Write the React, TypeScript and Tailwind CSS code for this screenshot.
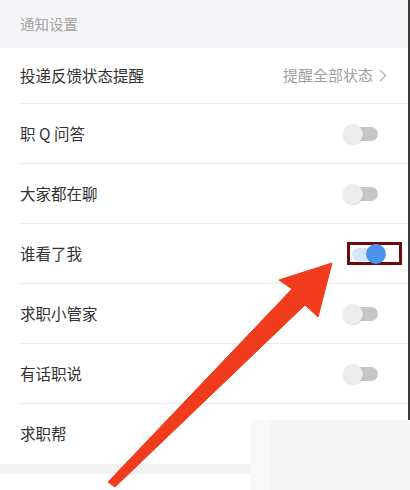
import React from "react";

const font = { fontFamily: '"Noto Sans CJK SC", "Noto Sans", sans-serif' };

function Toggle({ on }: { on?: boolean }) {
  if (on) {
    return (
      <div className="relative w-[34px] h-[20px]">
        <div className="absolute left-0 right-[6px] top-[4px] h-[13px] rounded-full bg-[#d3e5fb]" />
        <div className="absolute right-0 top-0 w-[20px] h-[20px] rounded-full bg-[#4a93ef]" />
      </div>
    );
  }
  return (
    <div className="relative w-[35px] h-[20px]">
      <div className="absolute left-[7px] right-0 top-[3px] h-[14px] rounded-full bg-[#c6c6c6]" />
      <div className="absolute left-0 top-0 w-[20px] h-[20px] rounded-full bg-[#ededed] shadow-[0_1px_2px_rgba(0,0,0,0.15)]" />
    </div>
  );
}

function Row({ label, children, last, h = "h-[60px]", pr = "pr-[30px]" }: { label: string; children?: React.ReactNode; last?: boolean; h?: string; pr?: string }) {
  return (
    <div className={`ml-5 ${h} flex items-center justify-between ${pr} ${last ? "" : "border-b border-[#ebebeb]"}`}>
      <span className="text-[15.5px] text-[#333333]">{label}</span>
      {children}
    </div>
  );
}

export default function App() {
  return (
    <div className="relative w-[410px] h-[490px] overflow-hidden bg-white" style={font}>
      <div className="flex h-[490px]">
        <div className="w-[408px] flex flex-col">
          <div className="h-[48px] bg-[#f5f5f7] pl-5 flex items-center text-[14.5px] text-[#a3a3a3]">通知设置</div>
          <Row label="投递反馈状态提醒" h="h-[56px]" pr="pr-[21px]">
            <div className="flex items-center gap-[6px] text-[15px] text-[#a0a0a0]">
              <span>提醒全部状态</span>
              <svg width="8" height="13" viewBox="0 0 8 13" fill="none">
                <path d="M1 1l5.5 5.5L1 12" stroke="#b0b0b0" strokeWidth="1.3" />
              </svg>
            </div>
          </Row>
          <Row label="职 Q 问答"><Toggle /></Row>
          <Row label="大家都在聊"><Toggle /></Row>
          <Row label="谁看了我" pr="pr-[6px]">
            <div className="w-[55px] h-[23px] border-[3px] border-[#6e0b0b] flex items-center justify-end pr-[13px]">
              <Toggle on />
            </div>
          </Row>
          <Row label="求职小管家"><Toggle /></Row>
          <Row label="有话职说"><Toggle /></Row>
          <Row label="求职帮" last />
          <div className="h-[10px] bg-[#f2f2f2]" />
          <div className="flex-1 bg-white" />
        </div>
        <div className="w-[2px] bg-[#3a3a3a]" />
      </div>

      <div className="absolute left-[250px] top-[420px] w-[160px] h-[70px] flex">
        <div className="w-[20px] bg-[#faf8f8]" />
        <div className="flex-1 bg-[#f5f5f5]" />
      </div>

      <svg className="absolute left-0 top-0" width="410" height="490" viewBox="0 0 410 490">
        <polygon
          points="332,263 279,280 292,289 108,482 115,487 305,305 318,317"
          fill="#f03c1c"
          stroke="#f03c1c"
          strokeWidth="1"
          strokeLinejoin="round"
        />
      </svg>
    </div>
  );
}
